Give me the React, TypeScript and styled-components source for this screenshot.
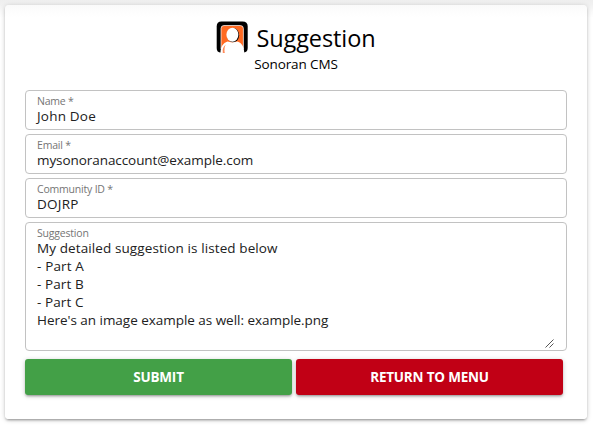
import React from 'react';
import styled, { createGlobalStyle } from 'styled-components';

const GlobalStyle = createGlobalStyle`
  * { box-sizing: border-box; }
  body {
    margin: 0;
    background: #fff;
    font-family: "Segoe UI", "Open Sans", "Noto Sans", sans-serif;
    overflow: hidden;
  }
`;

const Page = styled.main`
  height: 428px;
  padding: 5px 6px 9px 5px;
  background: linear-gradient(#eeeeee 0, #f1f1f1 5px, #fafafa 12px, #fff 18px);
`;

const Card = styled.form`
  display: flex;
  flex-direction: column;
  height: 414px;
  width: 582px;
  padding: 16px 20px 0;
  border-radius: 4px;
  background: linear-gradient(#fafafa 0, #fff 12px);
  box-shadow: 0 1px 5px rgba(0, 0, 0, 0.2), 0 2px 2px rgba(0, 0, 0, 0.14),
    0 3px 1px -2px rgba(0, 0, 0, 0.12);
`;

const Header = styled.header`
  display: flex;
  flex-direction: column;
  align-items: center;
  height: 69px;
  color: #000;
`;

const TitleRow = styled.div`
  display: flex;
  align-items: flex-start;
  gap: 8px;
  height: 33px;
`;

const Logo = styled.svg`
  display: block;
  width: 32px;
  height: 32px;
`;

const Title = styled.h1`
  margin: 0;
  font-size: 23.5px;
  font-weight: 400;
  line-height: 35px;
  letter-spacing: -0.1px;
  white-space: nowrap;
`;

const Subtitle = styled.div`
  font-size: 13.5px;
  line-height: 20px;
  letter-spacing: -0.1px;
`;

const Fields = styled.div`
  display: flex;
  flex-direction: column;
  gap: 4px;
`;

const Field = styled.div<{ $tall?: boolean }>`
  position: relative;
  height: ${({ $tall }) => ($tall ? 129 : 40)}px;
  padding: 4px 11px 0;
  border: 1px solid #c2c2c2;
  border-radius: 4px;
  background: #fff;
`;

const Label = styled.div`
  height: 12px;
  font-size: 10.5px;
  line-height: 13px;
  letter-spacing: -0.2px;
  color: #757575;
  white-space: nowrap;
`;

const Line = styled.div<{ $spacing: number }>`
  font-size: 13.5px;
  line-height: 18px;
  letter-spacing: ${({ $spacing }) => $spacing}px;
  color: #212121;
  white-space: pre;
`;

const ResizeGrip = styled.svg`
  position: absolute;
  right: 12px;
  bottom: 2px;
  width: 9px;
  height: 9px;
`;

const Actions = styled.div`
  display: flex;
  gap: 4px;
  margin-top: 8px;
`;

const Button = styled.button<{ $color: string }>`
  width: 267px;
  height: 36px;
  padding: 0;
  border: 0;
  border-radius: 3px;
  background: ${({ $color }) => $color};
  color: #fff;
  font: 700 13.5px/36px "Segoe UI", "Open Sans", "Noto Sans", sans-serif;
  letter-spacing: -0.2px;
  text-transform: uppercase;
  box-shadow: 0 1px 5px rgba(0, 0, 0, 0.2), 0 2px 2px rgba(0, 0, 0, 0.14),
    0 3px 1px -2px rgba(0, 0, 0, 0.12);
`;

type TextLine = { text: string; spacing: number };

const fields: { label: string; lines: TextLine[]; tall?: boolean }[] = [
  { label: 'Name *', lines: [{ text: 'John Doe', spacing: 0.2 }] },
  { label: 'Email *', lines: [{ text: 'mysonoranaccount@example.com', spacing: -0.07 }] },
  { label: 'Community ID *', lines: [{ text: 'DOJRP', spacing: 0.25 }] },
  {
    label: 'Suggestion',
    tall: true,
    lines: [
      { text: 'My detailed suggestion is listed below', spacing: 0.1 },
      { text: '- Part A', spacing: 0.15 },
      { text: '- Part B', spacing: 0.1 },
      { text: '- Part C', spacing: 0.1 },
      { text: "Here's an image example as well: example.png", spacing: -0.03 },
    ],
  },
];

export default function App() {
  return (
    <>
      <GlobalStyle />
      <Page>
        <Card>
          <Header>
            <TitleRow>
              <Logo viewBox="0 0 32 32" aria-hidden="true">
                <path d="M.7 5.500Q.7 .5 5.500 .5H26.500Q31.700 .5 31.700 5.500V27Q31.700 31 28 31.500H4Q.7 31 .7 27Z" fill="#000" />
                <path d="M5 28V7.500Q5 4.500 8 4.500H24.200Q27.400 4.500 27.400 7.500V28Z" fill="#ff6a22" stroke="#fff" strokeWidth=".7" />
                <ellipse cx="17.100" cy="14.200" rx="6" ry="7.200" fill="#000" />
                <path d="M4.500 32C4.500 26 7 22 11.500 20.600Q16 22.200 21.500 20.600C26 22 28 26 28.300 32Z" fill="#fff" />
                <ellipse cx="16.400" cy="13.800" rx="6" ry="7" fill="#fff" />
                <path d="M6.800 32Q5.800 26.500 9.800 23.500Q7.800 27 8.800 32Z" fill="#ff8b5a" />
              </Logo>
              <Title>Suggestion</Title>
            </TitleRow>
            <Subtitle>Sonoran CMS</Subtitle>
          </Header>
          <Fields>
            {fields.map(({ label, lines, tall }) => (
              <Field key={label} $tall={tall}>
                <Label>{label}</Label>
                {lines.map(({ text, spacing }) => (
                  <Line key={text} $spacing={spacing}>{text}</Line>
                ))}
                {tall && (
                  <ResizeGrip viewBox="0 0 9 9" aria-hidden="true">
                    <path d="M.5 8.500L8.500 .5M4.500 8.500L8.500 4.500" stroke="#444" strokeWidth=".9" />
                  </ResizeGrip>
                )}
              </Field>
            ))}
          </Fields>
          <Actions>
            <Button type="button" $color="#43a047">Submit</Button>
            <Button type="button" $color="#c10015">Return to menu</Button>
          </Actions>
        </Card>
      </Page>
    </>
  );
}
